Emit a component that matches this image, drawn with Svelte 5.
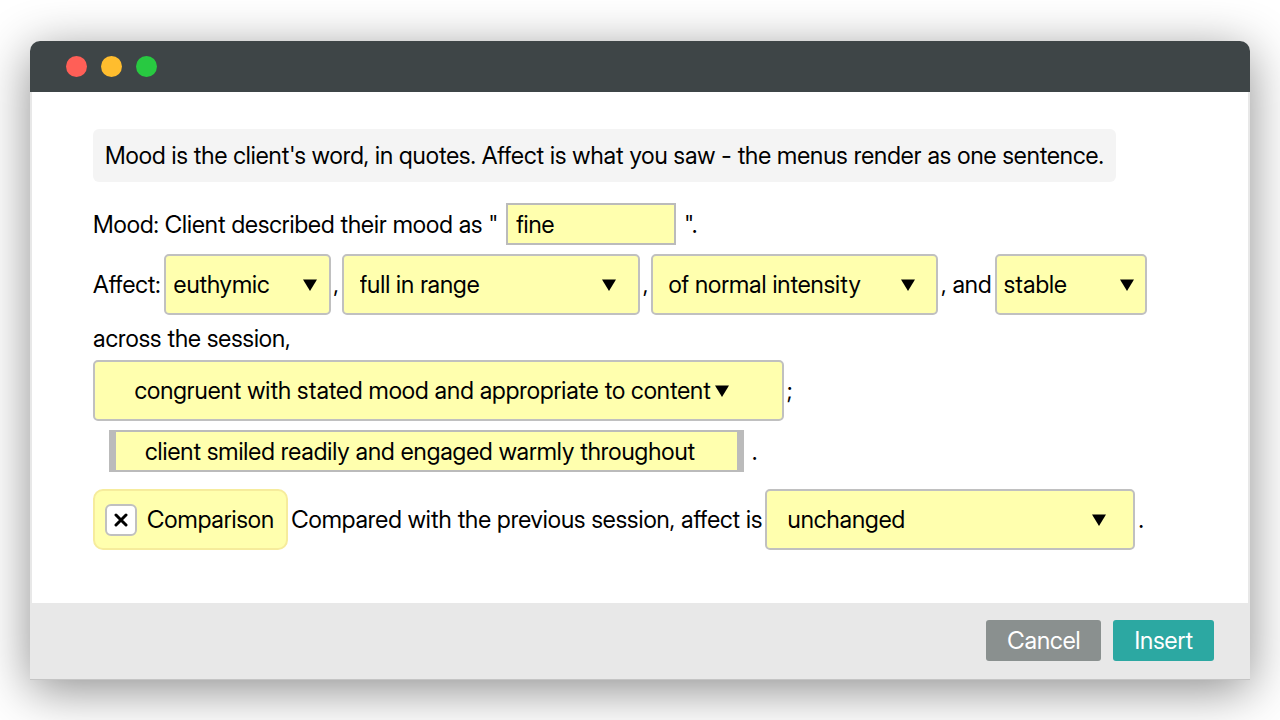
<script>
  const menus = {
    affect: ['euthymic', 'dysphoric', 'anxious', 'irritable', 'elevated'],
    range: ['full in range', 'restricted in range', 'blunted', 'flat'],
    intensity: ['of normal intensity', 'of low intensity', 'of high intensity'],
    stability: ['stable', 'labile'],
    congruence: [
      'congruent with stated mood and appropriate to content',
      'incongruent with stated mood'
    ],
    change: ['unchanged', 'improved', 'worse']
  };

  let mood = 'fine';
  let affect = menus.affect[0];
  let range = menus.range[0];
  let intensity = menus.intensity[0];
  let stability = menus.stability[0];
  let congruence = menus.congruence[0];
  let observation = 'client smiled readily and engaged warmly throughout';
  let compare = true;
  let change = menus.change[0];
</script>

<svelte:head>
  <title>Mood and affect</title>
</svelte:head>

<form class="window" on:submit|preventDefault>
  <header class="titlebar">
    <span class="dot close"></span>
    <span class="dot minimize"></span>
    <span class="dot zoom"></span>
  </header>

  <main class="content">
    <p class="note">Mood is the client's word, in quotes. Affect is what you saw - the menus render as one sentence.</p>

    <div class="row mood">
      <label for="mood">Mood: Client described their mood as "</label>
      <input id="mood" class="field short" type="text" bind:value={mood} />
      <span>".</span>
    </div>

    <div class="row sentence">
      <label for="affect">Affect:</label>
      <span class="menu affect">
        <select id="affect" bind:value={affect}>
          {#each menus.affect as item}<option>{item}</option>{/each}
        </select>
        <svg class="arrow" viewBox="0 0 14 12"><path d="M0 0.5h14L7 12z" /></svg>
      </span>
      <span>,</span>
      <span class="menu range">
        <select aria-label="Range" bind:value={range}>
          {#each menus.range as item}<option>{item}</option>{/each}
        </select>
        <svg class="arrow" viewBox="0 0 14 12"><path d="M0 0.5h14L7 12z" /></svg>
      </span>
      <span>,</span>
      <span class="menu intensity">
        <select aria-label="Intensity" bind:value={intensity}>
          {#each menus.intensity as item}<option>{item}</option>{/each}
        </select>
        <svg class="arrow" viewBox="0 0 14 12"><path d="M0 0.5h14L7 12z" /></svg>
      </span>
      <label for="stability">, and</label>
      <span class="menu stability">
        <select id="stability" bind:value={stability}>
          {#each menus.stability as item}<option>{item}</option>{/each}
        </select>
        <svg class="arrow" viewBox="0 0 14 12"><path d="M0 0.5h14L7 12z" /></svg>
      </span>
    </div>

    <div class="row text">
      <label for="congruence">across the session,</label>
    </div>

    <div class="row sentence">
      <span class="menu congruence">
        <select id="congruence" bind:value={congruence}>
          {#each menus.congruence as item}<option>{item}</option>{/each}
        </select>
        <svg class="arrow" viewBox="0 0 14 12"><path d="M0 0.5h14L7 12z" /></svg>
      </span>
      <span>;</span>
    </div>

    <div class="row observed">
      <input class="field long" type="text" aria-label="Observation" bind:value={observation} />
      <span>.</span>
    </div>

    <div class="row sentence">
      <label class="toggle">
        <span class="box">
          <input type="checkbox" bind:checked={compare} />
          {#if compare}
            <svg class="cross" viewBox="0 0 14 14"><path d="M2 2l10 10M12 2L2 12" /></svg>
          {/if}
        </span>
        Comparison
      </label>
      <label for="change">Compared with the previous session, affect is</label>
      <span class="menu change">
        <select id="change" bind:value={change}>
          {#each menus.change as item}<option>{item}</option>{/each}
        </select>
        <svg class="arrow" viewBox="0 0 14 12"><path d="M0 0.5h14L7 12z" /></svg>
      </span>
      <span>.</span>
    </div>
  </main>

  <footer class="actions">
    <button type="button" class="cancel">Cancel</button>
    <button type="submit" class="insert">Insert</button>
  </footer>
</form>

<style>
:global(body) {
  background: #fff;
  overflow: hidden;
}

.window {
  margin: 41px 30px;
  border-radius: 10px 10px 0 0;
  box-shadow: 0 10px 50px rgba(0, 0, 0, 0.45);
  color: #000;
  font-family: "Inter Display", Inter, "Liberation Sans", sans-serif;
  font-size: 24px;
  line-height: 29px;
}

.titlebar {
  display: flex;
  align-items: center;
  gap: 14px;
  height: 51px;
  padding: 0 36px;
  border-radius: 10px 10px 0 0;
  background: #3e4547;
}

.dot {
  width: 21px;
  height: 21px;
  border-radius: 50%;
}
.close { background: #ff5f57; }
.minimize { background: #ffbd2e; }
.zoom { background: #28c941; }

.content {
  padding: 37px 61px 53px;
  border: solid #e8e8e8;
  border-width: 0 2px;
  background: #fff;
}

.note {
  width: fit-content;
  margin: 0 0 21px;
  padding: 12px;
  border-radius: 6px;
  background: #f4f4f4;
  white-space: nowrap;
}

.row {
  display: flex;
  align-items: center;
  white-space: nowrap;
}
.mood { gap: 8px; margin-bottom: 9px; }
.sentence { gap: 3px; }
.text { height: 45px; padding-top: 2px; box-sizing: border-box; }
.observed { gap: 8px; margin: 9px 16px 17px; }

.field,
select {
  box-sizing: border-box;
  margin: 0;
  border: 2px solid #bbb;
  background: #ffffae;
  color: inherit;
  font: inherit;
  outline: none;
}

.field { height: 42px; padding: 0 8px; }
.short { width: 170px; }
.long {
  width: 635px;
  padding: 0 29px;
  border-left-width: 7px;
  border-right-width: 7px;
}

.menu {
  display: grid;
  flex-shrink: 0;
  align-items: center;
}
.menu select,
.menu .arrow { grid-area: 1 / 1; }
select {
  width: 100%;
  height: 61px;
  padding: 0 0 0 calc(6% - 2px);
  border-color: #c0c0c0;
  border-radius: 5px;
  appearance: none;
}
.arrow {
  width: 14px;
  height: 12px;
  justify-self: end;
  margin-right: 8%;
  pointer-events: none;
}

.affect { width: 167px; }
.range { width: 298px; }
.intensity { width: 287px; }
.stability { width: 152px; }
.congruence { width: 691px; }
.change { width: 370px; }

.toggle {
  display: flex;
  align-items: center;
  gap: 10px;
  box-sizing: border-box;
  height: 61px;
  padding: 0 12px 0 10px;
  border: 2px solid #f6ec9c;
  border-radius: 10px;
  background: #ffffae;
}

.box {
  display: grid;
  place-items: center;
}
.box input,
.box .cross { grid-area: 1 / 1; }
.box input {
  width: 32px;
  height: 32px;
  margin: 0;
  border: 2px solid #c0c0c0;
  border-radius: 6px;
  background: #fff;
  appearance: none;
}
.cross {
  width: 14px;
  height: 14px;
  fill: none;
  stroke: #000;
  stroke-width: 3;
  stroke-linecap: round;
  pointer-events: none;
}

.actions {
  display: flex;
  justify-content: flex-end;
  gap: 12px;
  padding: 17px 36px 18px;
  border-bottom: 1px solid #c4c4c4;
  background: #e8e8e8;
}

button {
  height: 41px;
  padding: 0 21px;
  border: 0;
  border-radius: 3px;
  color: #fff;
  font: inherit;
}
.cancel { background: #8a908f; }
.insert { background: #2ca8a2; }
</style>
